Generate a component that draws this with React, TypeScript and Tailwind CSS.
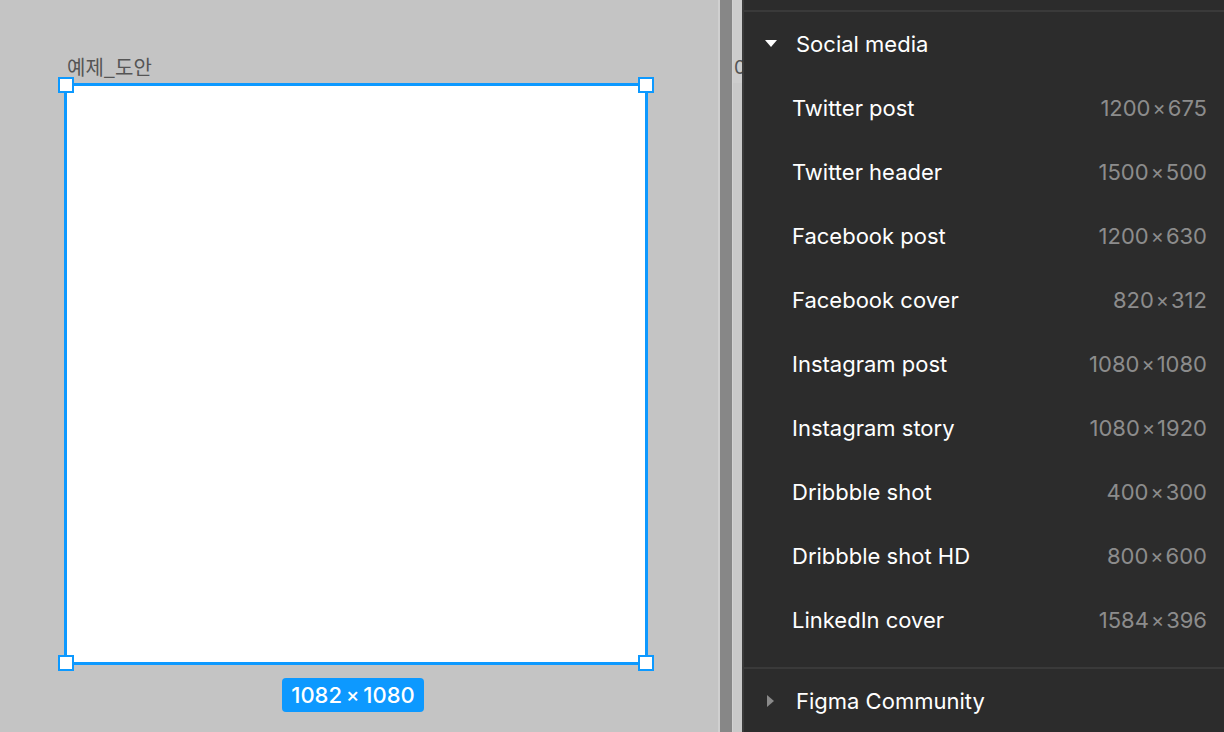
import React from "react";

const presets = [
  { name: "Twitter post", size: "1200×675" },
  { name: "Twitter header", size: "1500×500" },
  { name: "Facebook post", size: "1200×630" },
  { name: "Facebook cover", size: "820×312" },
  { name: "Instagram post", size: "1080×1080" },
  { name: "Instagram story", size: "1080×1920" },
  { name: "Dribbble shot", size: "400×300" },
  { name: "Dribbble shot HD", size: "800×600" },
  { name: "LinkedIn cover", size: "1584×396" },
];

function Handle({ className }: { className: string }) {
  return <div className={`absolute w-[16px] h-[16px] bg-white border-2 border-[#0d99ff] ${className}`} />;
}

function Size({ value }: { value: string }) {
  const [w, h] = value.split("×");
  return (
    <span className="flex items-center">
      {w}
      <span className="mx-[2px] text-[20px]">×</span>
      {h}
    </span>
  );
}

export default function App() {
  return (
    <div className="w-[1224px] h-[732px] flex overflow-hidden" style={{ fontFamily: "Inter, 'Noto Sans CJK KR', sans-serif" }}>
      {/* canvas */}
      <div className="w-[718px] bg-[#c4c4c4] pl-[64px] pt-[54px]">
        <div className="text-[20px] leading-[26px] text-[#555555] pl-[3px] h-[29px]" style={{ fontFamily: "'Noto Sans CJK KR', sans-serif" }}>
          예제_도안
        </div>
        <div className="w-[584px] flex flex-col items-center">
          <div className="relative w-[584px] h-[582px] bg-white border-[3px] border-[#0d99ff]">
            <Handle className="-left-[9px] -top-[9px]" />
            <Handle className="-right-[9px] -top-[9px]" />
            <Handle className="-left-[9px] -bottom-[9px]" />
            <Handle className="-right-[9px] -bottom-[9px]" />
          </div>
          <div className="mt-[13px] h-[34px] px-[9px] rounded-[4px] bg-[#0d99ff] text-white text-[22px] leading-[34px] flex items-center font-medium -ml-[6px]">
            1082<span className="mx-[4px] text-[20px]">×</span>1080
          </div>
        </div>
      </div>
      {/* strips */}
      <div className="w-[2px] bg-[#d0d0d0]" />
      <div className="w-[12px] bg-[#878787]" />
      <div className="w-[1px] bg-[#d2d2d2]" />
      <div className="w-[9px] bg-[#cacaca] overflow-hidden flex flex-col">
        <div className="h-[83px] bg-[#cdcdcd] pt-[55px] text-[19px] leading-[26px] text-[#555555] pl-[1px]">0</div>
        <div className="flex-1 bg-[#c9c9c9]" />
      </div>
      <div className="w-[2px] bg-[#3a3a3a]" />
      {/* panel */}
      <div className="flex-1 bg-[#2c2c2c] text-white flex flex-col overflow-hidden">
        <div className="shrink-0 h-[12px] border-b-2 border-[#3a3a3a]" />
        <div className="shrink-0 h-[64px] flex items-center pl-[21px] text-[22px]">
          <svg width="12" height="8" viewBox="0 0 12 8" className="mr-[19px]">
            <path d="M0 0 L12 0 L6 7 Z" fill="#ffffff" />
          </svg>
          Social media
        </div>
        {presets.map((p) => (
          <div key={p.name} className="shrink-0 h-[64px] flex items-center justify-between pl-[48px] pr-[17px] text-[22px]">
            <span className="text-white">{p.name}</span>
            <span className="text-[#8c8c8c]">
              <Size value={p.size} />
            </span>
          </div>
        ))}
        <div className="shrink-0 h-[17px] border-b-2 border-[#3a3a3a]" />
        <div className="shrink-0 h-[64px] flex items-center pl-[23px] text-[22px]">
          <svg width="8" height="12" viewBox="0 0 8 12" className="mr-[21px]">
            <path d="M0 0 L7 6 L0 12 Z" fill="#8a8a8a" />
          </svg>
          Figma Community
        </div>
      </div>
    </div>
  );
}
